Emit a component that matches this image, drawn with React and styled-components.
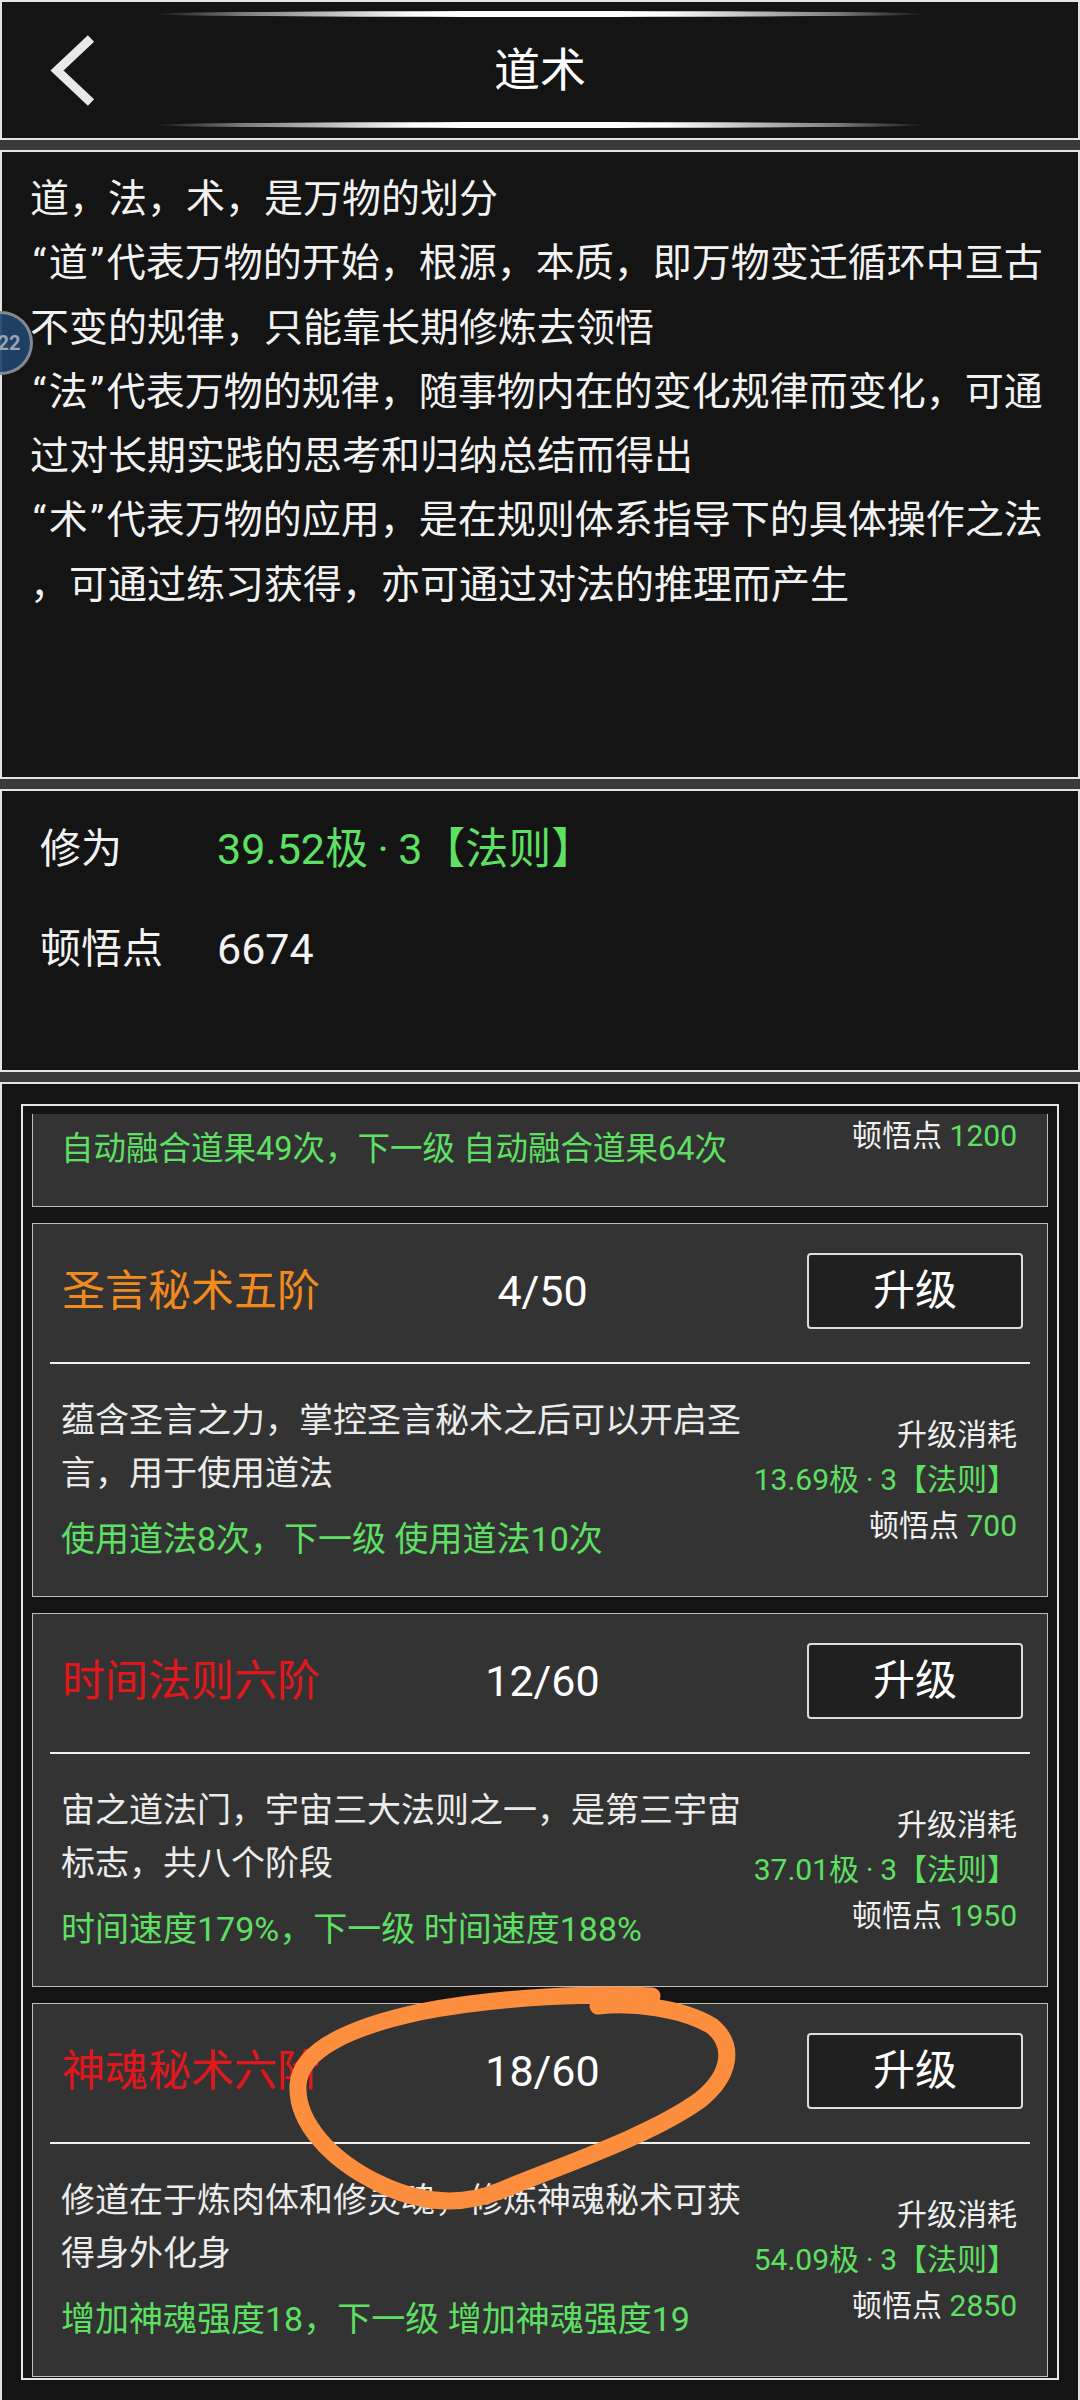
import React, { useLayoutEffect, useRef } from 'react'
import styled, { createGlobalStyle } from 'styled-components'

const GlobalStyle = createGlobalStyle`
    * { box-sizing: border-box; }
    html, body { margin: 0; padding: 0; }
    body {
        background: #3a3a3a;
        font-family: Roboto, "Noto Sans CJK SC", sans-serif;
        color: #f2f2f2;
    }
`

const GREEN = '#5ee063'
const TONES = { orange: '#f28a1d', red: '#e3161c' }

const intro = [
    '道，法，术，是万物的划分',
    '“道”代表万物的开始，根源，本质，即万物变迁循环中亘古',
    '不变的规律，只能靠长期修炼去领悟',
    '“法”代表万物的规律，随事物内在的变化规律而变化，可通',
    '过对长期实践的思考和归纳总结而得出',
    '“术”代表万物的应用，是在规则体系指导下的具体操作之法',
    '，可通过练习获得，亦可通过对法的推理而产生',
]

const skills = [
    {
        name: '道果融合四阶', tone: 'orange', level: '49/100',
        desc: '融合天地道果，掌控道果融合之后可以自动融合道果',
        effect: '自动融合道果49次，下一级 自动融合道果64次', compact: true,
        cost: ['9.87极', '3【法则】'], points: 1200,
    },
    {
        name: '圣言秘术五阶', tone: 'orange', level: '4/50',
        desc: '蕴含圣言之力，掌控圣言秘术之后可以开启圣言，用于使用道法',
        effect: '使用道法8次，下一级 使用道法10次',
        cost: ['13.69极', '3【法则】'], points: 700,
    },
    {
        name: '时间法则六阶', tone: 'red', level: '12/60',
        desc: '宙之道法门，宇宙三大法则之一，是第三宇宙标志，共八个阶段',
        effect: '时间速度179%，下一级 时间速度188%',
        cost: ['37.01极', '3【法则】'], points: 1950,
    },
    {
        name: '神魂秘术六阶', tone: 'red', level: '18/60',
        desc: '修道在于炼肉体和修灵魂，修炼神魂秘术可获得身外化身',
        effect: '增加神魂强度18，下一级 增加神魂强度19',
        cost: ['54.09极', '3【法则】'], points: 2850,
    },
]

// quotes get a little air on each side, as the app's font gives them
const withQuotes = line => line.split(/([“”])/).map((part, i) =>
    part === '“' || part === '”' ? <Quote key={i}>{part}</Quote> : part
)

const Realm = ({ parts }) => (
    <>{parts[0]}<Dot>·</Dot>{parts[1]}</>
)

const App = () => {

    const listRef = useRef(null)

    // the list is shown scrolled part way into the first card
    useLayoutEffect(() => {
        if(listRef.current) listRef.current.scrollTop = 282
    }, [])

    return (
        <Page>
            <GlobalStyle />

            <Header>
                <Glow />
                <TitleRow>
                    <BackButton aria-label="返回">
                        <svg width="60" height="80" viewBox="0 0 60 80">
                            <polyline
                                points="49,8.5 15,40.5 49,72.5"
                                fill="none"
                                stroke="#e8e8e8"
                                strokeWidth="9"
                                strokeLinejoin="miter"
                                strokeLinecap="butt"
                            />
                        </svg>
                    </BackButton>
                    <Title>道术</Title>
                    <span />
                </TitleRow>
                <Glow />
            </Header>

            <IntroPanel>
                {intro.map(line => <IntroLine key={line}>{withQuotes(line)}</IntroLine>)}
            </IntroPanel>

            <StatsPanel>
                <StatRow>
                    <span>修为</span>
                    <Value $green><Realm parts={['39.52极', '3【法则】']} /></Value>
                </StatRow>
                <StatRow>
                    <span>顿悟点</span>
                    <Value>6674</Value>
                </StatRow>
            </StatsPanel>

            <ListPanel>
                <Frame>
                    <Viewport ref={listRef}>
                        <CardList>
                            {skills.map(skill => (
                                <Card key={skill.name}>
                                    <CardHeader>
                                        <SkillName $tone={skill.tone}>{skill.name}</SkillName>
                                        <Count>{skill.level}</Count>
                                        <UpgradeButton>升级</UpgradeButton>
                                    </CardHeader>
                                    <Divider />
                                    <CardBody>
                                        <Desc>
                                            <DescText>{skill.desc}</DescText>
                                            <Effect $compact={skill.compact}>{skill.effect}</Effect>
                                        </Desc>
                                        <Cost>
                                            <div>升级消耗</div>
                                            <Green><Realm parts={skill.cost} /></Green>
                                            <div>顿悟点 <Green>{skill.points}</Green></div>
                                        </Cost>
                                    </CardBody>
                                </Card>
                            ))}
                        </CardList>
                    </Viewport>
                </Frame>
            </ListPanel>

            <FloatBall>22</FloatBall>

            <Annotation viewBox="0 0 1080 2400" width="1080" height="2400">
                <path
                    d="M 652 1996 C 600 1993, 500 1996, 420 2012 C 350 2027, 300 2050, 298 2085 C 296 2122, 330 2160, 380 2184 C 420 2203, 462 2207, 502 2190 C 562 2165, 650 2136, 700 2100 C 730 2076, 736 2046, 712 2026 C 682 2008, 632 2002, 598 2006"
                    fill="none"
                    stroke="#fc8e3d"
                    strokeWidth="17"
                    strokeLinecap="round"
                    strokeLinejoin="round"
                />
            </Annotation>
        </Page>
    )

}


const Page = styled.main `
    position: relative;
    width: 1080px;
    height: 2400px;
    overflow: hidden;
`

const Panel = styled.section `
    background: #141414;
    border: 2px solid #e4e4e4;
    margin-bottom: 10px;
`

const Header = styled(Panel) `
    height: 140px;
    padding: 9px 0 10px;
    display: flex;
    flex-direction: column;
    align-items: center;
`

const Glow = styled.div `
    width: 776px;
    height: 6px;
    border-radius: 50%;
    background: linear-gradient(90deg,
        rgba(255, 255, 255, 0) 0%,
        rgba(255, 255, 255, 0.45) 12%,
        #ffffff 34%,
        #ffffff 66%,
        rgba(255, 255, 255, 0.45) 88%,
        rgba(255, 255, 255, 0) 100%);
`

const TitleRow = styled.div `
    width: 100%;
    height: 105px;
    display: grid;
    grid-template-columns: 1fr auto 1fr;
    align-items: center;
`

const BackButton = styled.button `
    justify-self: start;
    margin-left: 40px;
    padding: 0;
    border: 0;
    background: none;
    display: flex;
    cursor: pointer;
`

const Title = styled.h1 `
    margin: 0;
    font-size: 46px;
    font-weight: 400;
    line-height: 1;
    color: #ffffff;
`

const IntroPanel = styled(Panel) `
    height: 629px;
    padding: 15px 0 0 28px;
`

const IntroLine = styled.p `
    margin: 0;
    font-size: 39px;
    line-height: 64.3px;
    white-space: nowrap;
    color: #f2f2f2;
`

const Quote = styled.span `
    padding: 0 2.5px;
`

const Dot = styled.span `
    margin: 0 0.22em;
`

const StatsPanel = styled(Panel) `
    height: 283px;
    padding: 8px 0 0 38px;
`

const StatRow = styled.div `
    height: 100px;
    display: grid;
    grid-template-columns: 177px auto;
    align-items: center;
    font-size: 41px;
    line-height: 1;
`

const Value = styled.span `
    font-size: 43px;
    color: ${p => p.$green ? GREEN : '#f2f2f2'};
`

const ListPanel = styled(Panel) `
    height: 1318px;
    margin-bottom: 0;
    border-bottom: 0;
    padding: 20px 19px 0;
`

const Frame = styled.div `
    border: 2px solid #e6e6e6;
    padding: 8px 9px 1px;
`

const Viewport = styled.div `
    height: 1263px;
    overflow-y: auto;
    scrollbar-width: none;
    &::-webkit-scrollbar {
        display: none;
    }
`

const CardList = styled.div `
    display: flex;
    flex-direction: column;
    gap: 16px;
`

const Card = styled.article `
    flex: none;
    height: 374px;
    background: #333333;
    border: 1px solid #bdbdbd;
    display: flex;
    flex-direction: column;
`

const CardHeader = styled.header `
    display: grid;
    grid-template-columns: 1fr auto 1fr;
    align-items: center;
    padding: 29px 24px 33px 29px;
`

const SkillName = styled.h3 `
    margin: 0;
    font-size: 43px;
    font-weight: 400;
    line-height: 1;
    white-space: nowrap;
    color: ${p => TONES[p.$tone]};
`

const Count = styled.span `
    font-size: 43px;
    line-height: 1;
    color: #ffffff;
`

const UpgradeButton = styled.button `
    justify-self: end;
    width: 216px;
    height: 76px;
    padding: 0;
    background: #202020;
    border: 2px solid #dcdcdc;
    border-radius: 4px;
    color: #ffffff;
    font-family: inherit;
    font-size: 42px;
    line-height: 1;
    cursor: pointer;
`

const Divider = styled.hr `
    margin: 0 17px;
    height: 2px;
    border: 0;
    background: #f0f0f0;
`

const CardBody = styled.div `
    flex: 1;
    display: flex;
    align-items: center;
    justify-content: space-between;
    padding: 0 30px 0 28px;
`

const Desc = styled.div `
    width: 690px;
`

const DescText = styled.p `
    margin: 0;
    font-size: 34px;
    line-height: 53px;
    color: #ececec;
`

const Effect = styled.p `
    margin: 13px 0 0;
    font-size: ${p => p.$compact ? '32.5px' : '34px'};
    line-height: 53px;
    white-space: nowrap;
    color: ${GREEN};
`

const Cost = styled.div `
    text-align: right;
    font-size: 30px;
    line-height: 45.5px;
    white-space: nowrap;
    color: #f0f0f0;
`

const Green = styled.span `
    color: ${GREEN};
`

const FloatBall = styled.div `
    position: absolute;
    left: -31px;
    top: 311px;
    width: 64px;
    height: 64px;
    border-radius: 50%;
    background: rgba(33, 68, 108, 0.92);
    border: 3px solid rgba(150, 150, 150, 0.85);
    display: grid;
    place-items: center;
    font-size: 20px;
    font-weight: 700;
    color: #9aa6b4;
    padding-left: 16px;
`

const Annotation = styled.svg `
    position: absolute;
    left: 0;
    top: 0;
    pointer-events: none;
`


export default App
